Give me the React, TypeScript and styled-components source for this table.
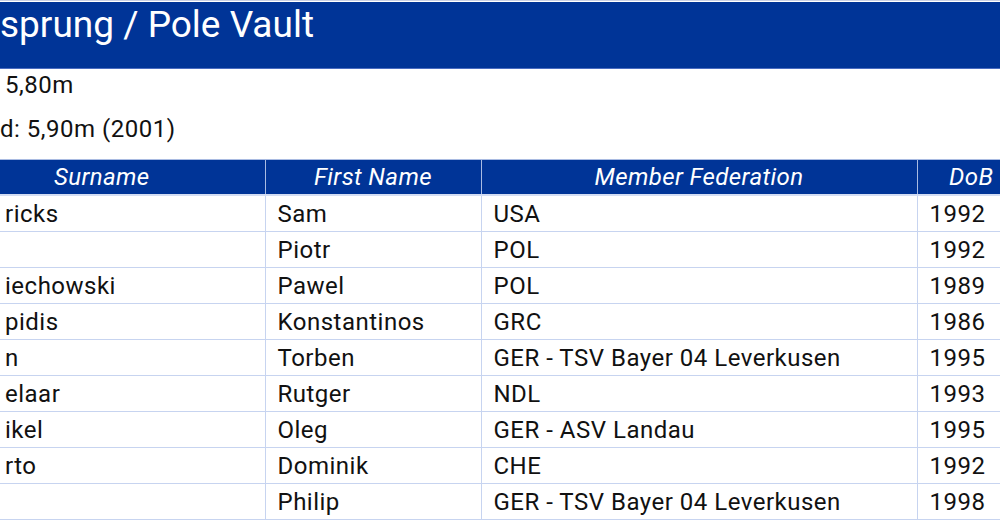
import React from 'react';
import styled, { createGlobalStyle } from 'styled-components';

const GlobalStyle = createGlobalStyle`
  html, body {
    margin: 0;
    padding: 0;
    background: #ffffff;
    overflow: hidden;
  }
  body {
    font-family: Roboto, "Liberation Sans", sans-serif;
    color: #111;
  }
`;

const Page = styled.div`
  width: 1000px;
  border-top: 1px solid #c9d0e4;
  padding-top: 1px;
`;

const TitleBar = styled.div`
  background: #003497;
  height: 67px;
  padding-top: 2px;
  border-bottom: 1px solid #4a6cc0;
  box-sizing: border-box;
`;

const Title = styled.h1`
  margin: 0;
  color: #fff;
  font-size: 37px;
  line-height: 42px;
  font-weight: normal;
  letter-spacing: 0;
`;

const Info = styled.div`
  display: flex;
  flex-direction: column;
  gap: 20px;
  padding-top: 4px;
  height: 90px;
  box-sizing: border-box;
`;

const InfoLine = styled.div<{ $indent: number }>`
  font-size: 24px;
  letter-spacing: 0.5px;
  line-height: 24px;
  padding-left: ${(p) => p.$indent}px;
`;

const Table = styled.table`
  border-collapse: collapse;
  table-layout: fixed;
  width: 1000px;
`;

const Th = styled.th<{ $w: number; $shift: number }>`
  box-sizing: border-box;
  width: ${(p) => p.$w}px;
  background: #003497;
  color: #fff;
  font-style: italic;
  font-weight: normal;
  font-size: 24px;
  letter-spacing: 0.4px;
  height: 35px;
  padding: 0;
  padding-left: ${(p) => (p.$shift > 0 ? p.$shift : 0)}px;
  padding-right: ${(p) => (p.$shift < 0 ? -p.$shift : 0)}px;
  border: 1px solid #a9bbe2;
  border-bottom: 2px solid #d3ddf3;
  &:first-child { border-left: none; }
  &:last-child { border-right: none; }
`;

const Td = styled.td`
  font-size: 24px;
  letter-spacing: 0.5px;
  height: 33px;
  padding: 2px 12px 0;
  border: 1px solid #c7d4f0;
  white-space: nowrap;
  overflow: hidden;
  &:first-child { border-left: none; padding-left: 5px; }
  &:last-child { border-right: none; }
`;

const columns = [
  { label: 'Surname', w: 265, shift: -61 },
  { label: 'First Name', w: 216, shift: 0 },
  { label: 'Member Federation', w: 436, shift: 0 },
  { label: 'DoB', w: 83, shift: 25 },
];

const athletes = [
  ['ricks', 'Sam', 'USA', '1992'],
  ['', 'Piotr', 'POL', '1992'],
  ['iechowski', 'Pawel', 'POL', '1989'],
  ['pidis', 'Konstantinos', 'GRC', '1986'],
  ['n', 'Torben', 'GER - TSV Bayer 04 Leverkusen', '1995'],
  ['elaar', 'Rutger', 'NDL', '1993'],
  ['ikel', 'Oleg', 'GER - ASV Landau', '1995'],
  ['rto', 'Dominik', 'CHE', '1992'],
  ['', 'Philip', 'GER - TSV Bayer 04 Leverkusen', '1998'],
];

export default function App() {
  return (
    <Page>
      <GlobalStyle />
      <TitleBar>
        <Title>sprung / Pole Vault</Title>
      </TitleBar>
      <Info>
        <InfoLine $indent={5}>5,80m</InfoLine>
        <InfoLine $indent={0}>d: 5,90m (2001)</InfoLine>
      </Info>
      <Table>
        <thead>
          <tr>
            {columns.map((c) => (
              <Th key={c.label} $w={c.w} $shift={c.shift}>{c.label}</Th>
            ))}
          </tr>
        </thead>
        <tbody>
          {athletes.map((a, i) => (
            <tr key={i}>
              {a.map((cell, j) => (
                <Td key={j}>{cell}</Td>
              ))}
            </tr>
          ))}
        </tbody>
      </Table>
    </Page>
  );
}
